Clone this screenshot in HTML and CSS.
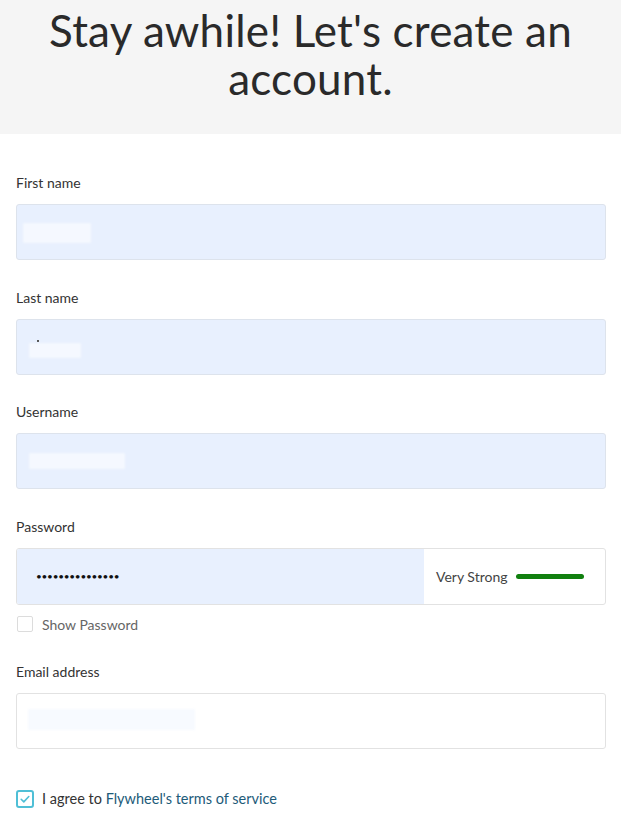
FILE: index.html
```html
<!DOCTYPE html>
<html lang="en">
<head>
<meta charset="utf-8">
<title>Create account</title>
<link rel="stylesheet" href="styles.css">
</head>
<body>
<header class="hero">
  <h1 class="hero-title">Stay awhile! Let's create an account.</h1>
</header>
<form class="signup">
  <div class="field">
    <label class="label">First name</label>
    <div class="input input-filled"><span class="blur blur-first"></span></div>
  </div>
  <div class="field">
    <label class="label">Last name</label>
    <div class="input input-filled"><span class="speck"></span><span class="blur blur-last"></span></div>
  </div>
  <div class="field">
    <label class="label">Username</label>
    <div class="input input-filled"><span class="blur blur-user"></span></div>
  </div>
  <div class="field">
    <label class="label">Password</label>
    <div class="input input-password">
      <div class="pw-value">•••••••••••••••</div>
      <div class="pw-strength">
        <span class="pw-text">Very Strong</span>
        <span class="pw-bar"></span>
      </div>
    </div>
    <div class="check-row check-row-show">
      <span class="box"></span>
      <span class="check-text muted">Show Password</span>
    </div>
  </div>
  <div class="field">
    <label class="label">Email address</label>
    <div class="input"><span class="blur blur-email"></span></div>
  </div>
  <div class="check-row check-row-agree">
    <span class="box box-checked">
      <svg viewBox="0 0 18 18" width="18" height="18"><path d="M5.2 9.3l2.6 2.6 5-5.4" fill="none" stroke="#4fbfd6" stroke-width="1.6" stroke-linecap="round" stroke-linejoin="round"/></svg>
    </span>
    <span class="check-text check-text-agree">I agree to <a class="link" href="#">Flywheel's terms of service</a></span>
  </div>
</form>
</body>
</html>
```
FILE: styles.css
```css
* { box-sizing: border-box; }
html, body { margin: 0; padding: 0; background: #fff; }
body {
  font-family: Lato, "Open Sans", "Liberation Sans", sans-serif;
  color: #333;
}
.hero {
  background: #f5f5f5;
  height: 134px;
  padding-top: 6px;
}
.hero-title {
  margin: 0 auto;
  width: 580px;
  text-align: center;
  font-weight: 400;
  font-size: 44px;
  line-height: 48px;
  color: #2a2a2a;
  letter-spacing: 0.2px;
}
.signup {
  padding: 40px 15px 0 16px;
}
.field {
  display: flex;
  flex-direction: column;
  margin-bottom: 28.67px;
}
.label {
  font-size: 14px;
  line-height: 18px;
  color: #333;
  margin-bottom: 12px;
}
.input {
  position: relative;
  height: 56px;
  border: 1px solid #e2e2e2;
  border-radius: 3px;
  background: #fff;
}
.input-filled {
  background: #e8f0fe;
  border-color: #dde3ec;
}
.blur {
  position: absolute;
  background: rgba(255,255,255,0.55);
  filter: blur(1px);
}
.blur-first { left: 6px; top: 18px; width: 68px; height: 20px; }
.blur-last { left: 12px; top: 23px; width: 52px; height: 15px; }
.blur-user { left: 12px; top: 19px; width: 96px; height: 16px; }
.blur-email { left: 11px; top: 15px; width: 167px; height: 21px; background: rgba(232,240,254,0.35); }
.speck {
  position: absolute;
  left: 20px; top: 20px;
  width: 2px; height: 2px;
  background: #555;
}
.input-password {
  display: flex;
  height: 57px;
  overflow: hidden;
}
.pw-value {
  flex: 0 0 407px;
  background: #e8f0fe;
  display: flex;
  align-items: center;
  padding-left: 19px;
  font-size: 10px;
  letter-spacing: -0.25px;
  color: #111;
}
.pw-strength {
  flex: 1;
  display: flex;
  align-items: center;
  padding-left: 12px;
  gap: 8px;
}
.pw-text { font-size: 14px; color: #444; }
.pw-bar {
  width: 68px;
  height: 5px;
  border-radius: 3px;
  background: #11800f;
}
.check-row {
  display: flex;
  align-items: center;
  gap: 9px;
}
.check-row-show { margin-top: 11px; margin-bottom: 1.5px; padding-left: 1px; }
.check-row-agree { margin-top: 40.5px; }
.box {
  width: 16px; height: 16px;
  border: 1px solid #dcdcdc;
  border-radius: 2px;
  display: inline-flex;
  align-items: center;
  justify-content: center;
}
.box-checked {
  width: 18px; height: 18px;
  border: 2px solid #4fbfd6;
  border-radius: 3px;
  margin-right: -1px;
}
.box-checked svg { flex: none; margin: -2px; }
.check-text { font-size: 14px; color: #333; }
.check-text-agree { font-size: 14.5px; }
.muted { color: #666; }
.link { color: #1d5b79; text-decoration: none; }
```
